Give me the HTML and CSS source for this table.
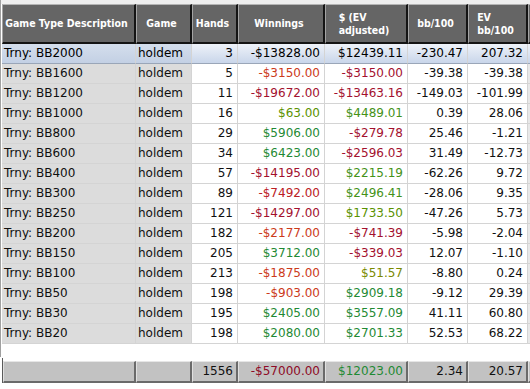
FILE: index.html
```html
<!DOCTYPE html>
<html>
<head>
<meta charset="utf-8">
<link rel="stylesheet" href="styles.css">
</head>
<body>
<div class="scroll">
  <div class="row head">
    <div class="hc"><span>Game Type Description</span></div>
    <div class="hc"><span>Game</span></div>
    <div class="hc"><span>Hands</span></div>
    <div class="hc"><span>Winnings</span></div>
    <div class="hc"><span>$ (EV<br>adjusted)</span></div>
    <div class="hc"><span>bb/100</span></div>
    <div class="hc"><span>EV<br>bb/100</span></div>
    <div class="hc filler"></div>
  </div>
  <div class="row sel">
    <div class="c g l">Trny: BB2000</div><div class="c g l">holdem</div><div class="c r">3</div><div class="c r">-$13828.00</div><div class="c r">$12439.11</div><div class="c r">-230.47</div><div class="c r">207.32</div><div class="c f"></div>
  </div>
  <div class="row">
    <div class="c g l">Trny: BB1600</div><div class="c g l">holdem</div><div class="c r">5</div><div class="c r n1">-$3150.00</div><div class="c r n3">-$3150.00</div><div class="c r">-39.38</div><div class="c r">-39.38</div><div class="c f"></div>
  </div>
  <div class="row">
    <div class="c g l">Trny: BB1200</div><div class="c g l">holdem</div><div class="c r">11</div><div class="c r n3">-$19672.00</div><div class="c r n3">-$13463.16</div><div class="c r">-149.03</div><div class="c r">-101.99</div><div class="c f"></div>
  </div>
  <div class="row">
    <div class="c g l">Trny: BB1000</div><div class="c g l">holdem</div><div class="c r">16</div><div class="c r p1">$63.00</div><div class="c r p2">$4489.01</div><div class="c r">0.39</div><div class="c r">28.06</div><div class="c f"></div>
  </div>
  <div class="row">
    <div class="c g l">Trny: BB800</div><div class="c g l">holdem</div><div class="c r">29</div><div class="c r p3">$5906.00</div><div class="c r n3">-$279.78</div><div class="c r">25.46</div><div class="c r">-1.21</div><div class="c f"></div>
  </div>
  <div class="row">
    <div class="c g l">Trny: BB600</div><div class="c g l">holdem</div><div class="c r">34</div><div class="c r p3">$6423.00</div><div class="c r n3">-$2596.03</div><div class="c r">31.49</div><div class="c r">-12.73</div><div class="c f"></div>
  </div>
  <div class="row">
    <div class="c g l">Trny: BB400</div><div class="c g l">holdem</div><div class="c r">57</div><div class="c r n3">-$14195.00</div><div class="c r p2">$2215.19</div><div class="c r">-62.26</div><div class="c r">9.72</div><div class="c f"></div>
  </div>
  <div class="row">
    <div class="c g l">Trny: BB300</div><div class="c g l">holdem</div><div class="c r">89</div><div class="c r n2">-$7492.00</div><div class="c r p2">$2496.41</div><div class="c r">-28.06</div><div class="c r">9.35</div><div class="c f"></div>
  </div>
  <div class="row">
    <div class="c g l">Trny: BB250</div><div class="c g l">holdem</div><div class="c r">121</div><div class="c r n3">-$14297.00</div><div class="c r p1">$1733.50</div><div class="c r">-47.26</div><div class="c r">5.73</div><div class="c f"></div>
  </div>
  <div class="row">
    <div class="c g l">Trny: BB200</div><div class="c g l">holdem</div><div class="c r">182</div><div class="c r n1">-$2177.00</div><div class="c r n3">-$741.39</div><div class="c r">-5.98</div><div class="c r">-2.04</div><div class="c f"></div>
  </div>
  <div class="row">
    <div class="c g l">Trny: BB150</div><div class="c g l">holdem</div><div class="c r">205</div><div class="c r p3">$3712.00</div><div class="c r n3">-$339.03</div><div class="c r">12.07</div><div class="c r">-1.10</div><div class="c f"></div>
  </div>
  <div class="row">
    <div class="c g l">Trny: BB100</div><div class="c g l">holdem</div><div class="c r">213</div><div class="c r n1">-$1875.00</div><div class="c r p0">$51.57</div><div class="c r">-8.80</div><div class="c r">0.24</div><div class="c f"></div>
  </div>
  <div class="row">
    <div class="c g l">Trny: BB50</div><div class="c g l">holdem</div><div class="c r">198</div><div class="c r n1">-$903.00</div><div class="c r p3">$2909.18</div><div class="c r">-9.12</div><div class="c r">29.39</div><div class="c f"></div>
  </div>
  <div class="row">
    <div class="c g l">Trny: BB30</div><div class="c g l">holdem</div><div class="c r">195</div><div class="c r p3">$2405.00</div><div class="c r p3">$3557.09</div><div class="c r">41.11</div><div class="c r">60.80</div><div class="c f"></div>
  </div>
  <div class="row">
    <div class="c g l">Trny: BB20</div><div class="c g l">holdem</div><div class="c r">198</div><div class="c r p3">$2080.00</div><div class="c r p3">$2701.33</div><div class="c r">52.53</div><div class="c r">68.22</div><div class="c f"></div>
  </div>
</div>
<div class="footer">
  <div class="frow">
    <div class="fc"></div>
    <div class="fc"></div>
    <div class="fc">1556</div>
    <div class="fc n4">-$57000.00</div>
    <div class="fc p3">$12023.00</div>
    <div class="fc">2.34</div>
    <div class="fc">20.57</div>
    <div class="fc filler"></div>
  </div>
</div>
</body>
</html>
```
FILE: styles.css
```css
html, body {
  margin: 0;
  padding: 0;
  background: #ffffff;
  width: 530px;
  height: 389px;
  overflow: hidden;
  font-family: "DejaVu Sans", Verdana, sans-serif;
  font-size: 12px;
  color: #101010;
}

.scroll {
  border-left: 1px solid #a0a0a0;
  padding-left: 1px;
  padding-top: 4px;
  padding-bottom: 13px;
  background: linear-gradient(#eeeeee, #eeeeee) no-repeat 0 0 / 100% 4px;
}

.row {
  display: grid;
  grid-template-columns: 134px 56px 46px 87px 83px 60px 60px 2px;
  height: 20px;
}

.row.head {
  height: 40px;
}

.hc {
  box-sizing: border-box;
  background: #656565;
  border-top: 1px solid #b4b4b4;
  border-left: 1px solid #a4a4a4;
  border-right: 2px solid #141414;
  border-bottom: 2px solid #141414;
  color: #ffffff;
  font-family: "DejaVu Sans Condensed", "DejaVu Sans", sans-serif;
  font-stretch: condensed;
  font-weight: bold;
  font-size: 10.5px;
  line-height: 13px;
  display: flex;
  align-items: center;
  justify-content: center;
  padding-right: 4px;
}

.hc span {
  text-align: left;
}

.hc.filler {
  border-right: none;
  padding: 0;
}

.c {
  box-sizing: border-box;
  border-right: 1px solid #d4d4d4;
  border-bottom: 1px solid #d4d4d4;
  line-height: 19px;
  white-space: nowrap;
  overflow: hidden;
  background: #ffffff;
}

.c.g {
  background: #dcdcdc;
}

.c.l {
  padding-left: 2px;
}

.c.r {
  text-align: right;
  padding-right: 4px;
}

.c.f {
  background: #e8e8e8;
  border-right: none;
}

.row.sel .c {
  background: linear-gradient(#eef2f9, #c9d6ea);
  border-bottom-color: #9aa6b8;
  color: #000000;
}

.row.sel .c.g {
  background: linear-gradient(#d4deec, #c3d0e4);
}

.n1 { color: #cc3a1a; }
.n2 { color: #bb2024; }
.n3 { color: #a3102e; }
.n4 { color: #8e0a26; }
.p0 { color: #7a8a00; }
.p1 { color: #5a9200; }
.p2 { color: #449218; }
.p3 { color: #1f8a34; }

.footer {
  margin-left: 2px;
  margin-top: 1px;
  border-left: 1px solid #5a5a5a;
  padding-top: 3px;
}

.frow {
  display: grid;
  grid-template-columns: 133px 56px 46px 87px 83px 60px 60px 2px;
  height: 22px;
}

.fc {
  box-sizing: border-box;
  background: #c2c2c2;
  border-top: 1px solid #e6e6e6;
  border-left: 1px solid #e0e0e0;
  border-right: 2px solid #6a6a6a;
  border-bottom: 2px solid #6a6a6a;
  text-align: right;
  padding-right: 3px;
  line-height: 19px;
  white-space: nowrap;
  overflow: hidden;
}

.fc.filler {
  border-right: none;
  padding: 0;
}
```
